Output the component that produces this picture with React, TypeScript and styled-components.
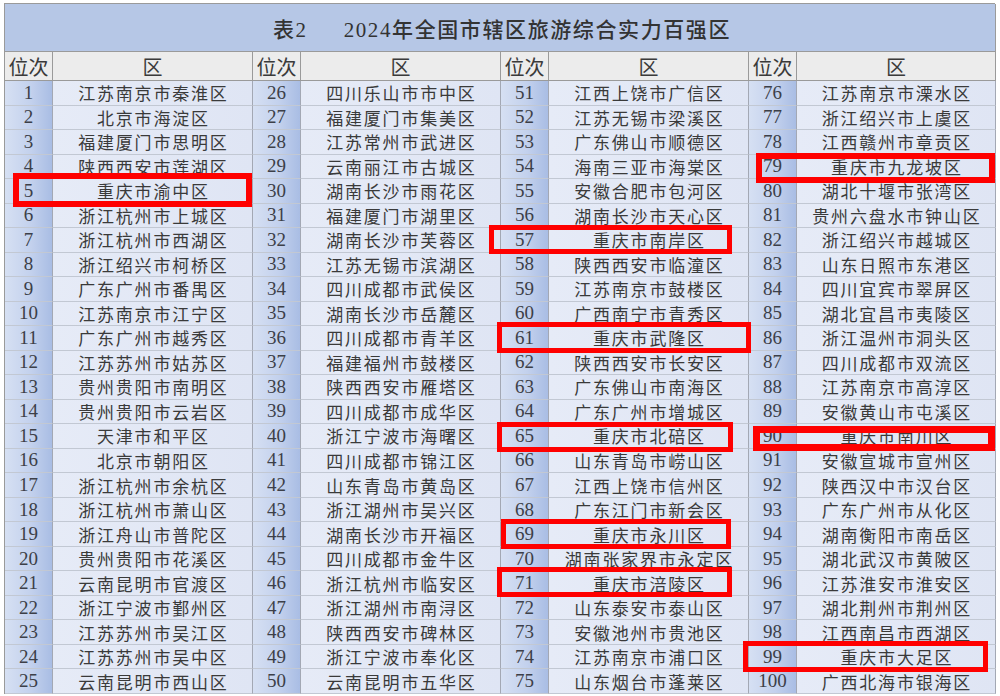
import * as React from 'react'
import styled, {createGlobalStyle} from 'styled-components'

const GlobalStyle = createGlobalStyle`
  html, body {
    margin: 0;
    padding: 0;
    background: #fff;
  }
  body {
    font-family: "Liberation Serif", "Noto Sans CJK SC", serif;
  }
`

const Page = styled.div`
  position: relative;
  width: 1000px;
  height: 696px;
  padding: 3px 5px 3px 4px;
  box-sizing: border-box;
`

const Table = styled.div`
  display: grid;
  grid-template-columns: 48px 200px 48px 200px 48px 200px 48px 199px;
  grid-template-rows: 48px 29px repeat(25, 24.52px);
  border-top: 1px solid #9a9a9a;
  border-left: 1px solid #9a9a9a;
  color: #3a3a3a;
`

const Title = styled.div`
  grid-column: 1 / -1;
  display: flex;
  align-items: center;
  justify-content: center;
  gap: 36px;
  background: #b6c7e6;
  border-right: 1px solid #9a9a9a;
  border-bottom: 1px solid #9a9a9a;
  font-family: "Liberation Serif", "Noto Sans CJK SC", serif;
  font-size: 21px;
  font-weight: 500;
  letter-spacing: 1.6px;
  color: #333;
  padding-left: 4px;
`

const HeadCell = styled.div`
  display: flex;
  align-items: center;
  justify-content: center;
  background: #ececec;
  border-right: 1px solid #9a9a9a;
  border-bottom: 1px solid #9a9a9a;
  font-family: "Noto Sans CJK SC", sans-serif;
  font-size: 20px;
  color: #3a3a3a;
`

const RankCell = styled.div`
  display: flex;
  align-items: center;
  justify-content: center;
  background: linear-gradient(90deg, #d6e0f3 0%, #c3d1ed 55%, #a9bde4 100%);
  border-right: 1px solid #a3a8b4;
  border-bottom: 1px solid #c2c8d3;
  font-family: "Liberation Serif", serif;
  font-size: 19px;
  color: #3c3f48;
`

const NameCell = styled.div`
  display: flex;
  align-items: center;
  justify-content: center;
  background: linear-gradient(90deg, #e6ebf7 0%, #dfe5f4 100%);
  border-right: 1px solid #a3a8b4;
  border-bottom: 1px solid #c2c8d3;
  font-family: "Noto Sans CJK SC", sans-serif;
  font-size: 17px;
  letter-spacing: 1.8px;
  padding-left: 1.8px;
  color: #3a3a3a;
  white-space: nowrap;
`

const Mark = styled.div<{$t: number}>`
  position: absolute;
  box-sizing: border-box;
  border: ${(p) => p.$t}px solid #ff0000;
  pointer-events: none;
`

const names: string[] = [
  '江苏南京市秦淮区', '北京市海淀区', '福建厦门市思明区', '陕西西安市莲湖区', '重庆市渝中区',
  '浙江杭州市上城区', '浙江杭州市西湖区', '浙江绍兴市柯桥区', '广东广州市番禺区', '江苏南京市江宁区',
  '广东广州市越秀区', '江苏苏州市姑苏区', '贵州贵阳市南明区', '贵州贵阳市云岩区', '天津市和平区',
  '北京市朝阳区', '浙江杭州市余杭区', '浙江杭州市萧山区', '浙江舟山市普陀区', '贵州贵阳市花溪区',
  '云南昆明市官渡区', '浙江宁波市鄞州区', '江苏苏州市吴江区', '江苏苏州市吴中区', '云南昆明市西山区',

  '四川乐山市市中区', '福建厦门市集美区', '江苏常州市武进区', '云南丽江市古城区', '湖南长沙市雨花区',
  '福建厦门市湖里区', '湖南长沙市芙蓉区', '江苏无锡市滨湖区', '四川成都市武侯区', '湖南长沙市岳麓区',
  '四川成都市青羊区', '福建福州市鼓楼区', '陕西西安市雁塔区', '四川成都市成华区', '浙江宁波市海曙区',
  '四川成都市锦江区', '山东青岛市黄岛区', '浙江湖州市吴兴区', '湖南长沙市开福区', '四川成都市金牛区',
  '浙江杭州市临安区', '浙江湖州市南浔区', '陕西西安市碑林区', '浙江宁波市奉化区', '云南昆明市五华区',

  '江西上饶市广信区', '江苏无锡市梁溪区', '广东佛山市顺德区', '海南三亚市海棠区', '安徽合肥市包河区',
  '湖南长沙市天心区', '重庆市南岸区', '陕西西安市临潼区', '江苏南京市鼓楼区', '广西南宁市青秀区',
  '重庆市武隆区', '陕西西安市长安区', '广东佛山市南海区', '广东广州市增城区', '重庆市北碚区',
  '山东青岛市崂山区', '江西上饶市信州区', '广东江门市新会区', '重庆市永川区', '湖南张家界市永定区',
  '重庆市涪陵区', '山东泰安市泰山区', '安徽池州市贵池区', '江苏南京市浦口区', '山东烟台市蓬莱区',

  '江苏南京市溧水区', '浙江绍兴市上虞区', '江西赣州市章贡区', '重庆市九龙坡区', '湖北十堰市张湾区',
  '贵州六盘水市钟山区', '浙江绍兴市越城区', '山东日照市东港区', '四川宜宾市翠屏区', '湖北宜昌市夷陵区',
  '浙江温州市洞头区', '四川成都市双流区', '江苏南京市高淳区', '安徽黄山市屯溪区', '重庆市南川区',
  '安徽宣城市宣州区', '陕西汉中市汉台区', '广东广州市从化区', '湖南衡阳市南岳区', '湖北武汉市黄陂区',
  '江苏淮安市淮安区', '湖北荆州市荆州区', '江西南昌市西湖区', '重庆市大足区', '广西北海市银海区',
]

// red boxes drawn over the picture: [left, top, width, height, thickness]
const marks: [number, number, number, number, number][] = [
  [13, 173, 239, 34, 6],
  [489, 225, 243, 29, 5],
  [497, 322, 254, 31, 5],
  [497, 422, 236, 30, 5],
  [753, 426, 242, 25, 7],
  [501, 519, 230, 30, 5],
  [497, 567, 235, 30, 5],
  [756, 153, 239, 30, 6],
  [743, 641, 245, 31, 5],
]

const App: React.FC = () => {
  const rows = Array.from({length: 25}, (_, r) => r)
  const cols = [0, 1, 2, 3]

  return (
    <Page>
      <GlobalStyle />
      <Table>
        <Title>
          <span>表2</span>
          <span>2024年全国市辖区旅游综合实力百强区</span>
        </Title>
        {cols.map((c) => (
          <React.Fragment key={'h' + c}>
            <HeadCell>位次</HeadCell>
            <HeadCell>区</HeadCell>
          </React.Fragment>
        ))}
        {rows.map((r) =>
          cols.map((c) => {
            const i = c * 25 + r
            return (
              <React.Fragment key={i}>
                <RankCell>{i + 1}</RankCell>
                <NameCell>{names[i]}</NameCell>
              </React.Fragment>
            )
          })
        )}
      </Table>
      {marks.map(([x, y, w, h, t], k) => (
        <Mark key={k} $t={t} style={{left: x, top: y, width: w, height: h}} />
      ))}
    </Page>
  )
}

export default App
